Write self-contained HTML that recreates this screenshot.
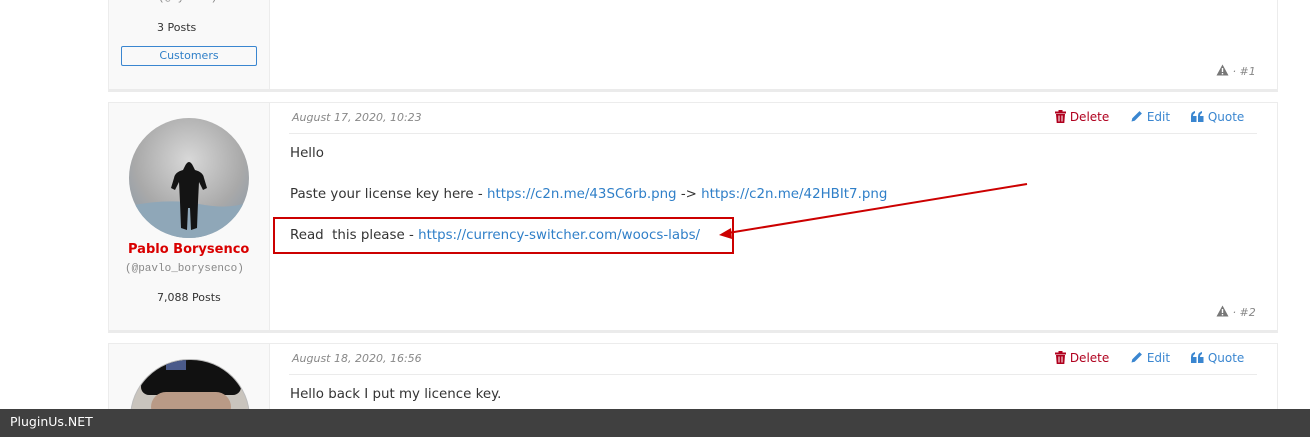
<!DOCTYPE html>
<html><head><meta charset="utf-8"><style>
html,body{margin:0;width:1310px;height:437px;overflow:hidden}
body{background:#fff;font-family:"DejaVu Sans","Liberation Sans",sans-serif;position:relative}
.a{position:absolute;white-space:nowrap}
.post{position:absolute;left:108px;width:1168px;border:1px solid #ececec;border-bottom:3px solid #ebebeb;background:#fff}
.left{position:absolute;left:0;top:0;bottom:0;width:160px;background:#f9f9f9;border-right:1px solid #ececec}
.t{font-size:13.4px;color:#333}
.l{color:#2f7fc8}
.date{font-size:11px;font-style:italic;color:#888}
.hr{position:absolute;height:1px;background:#ebebeb}
.act{font-size:12px}
.num{font-size:11px;color:#888;font-style:italic}
</style></head><body>
<div class="post" style="top:-10px;height:98px"><div class="left"></div></div>
<div class="a" style="left:158px;top:-8px;font-size:11px;color:#888;font-family:'Liberation Mono',monospace">(@xylian)</div>
<div class="a" style="left:157px;top:21px;font-size:11px;color:#333">3 Posts</div>
<div class="a" style="left:121px;top:46px;width:134px;height:18px;border:1px solid #3a86d0;border-radius:2px;font-size:11px;color:#2f7fc8;text-align:center;line-height:18px">Customers</div>
<div class="a num" style="left:1216px;top:64px"><svg width="13" height="12" viewBox="0 0 13 12" style="vertical-align:-1px"><path d="M6.5 0.5L12.5 11.5H0.5Z" fill="#777"/><rect x="5.8" y="4" width="1.4" height="4" fill="#fff"/><rect x="5.8" y="9" width="1.4" height="1.4" fill="#fff"/></svg> · #1</div>

<div class="post" style="top:102px;height:227px"><div class="left"></div></div>
<div class="a" style="left:129px;top:118px;width:120px;height:120px;border-radius:50%;background:radial-gradient(circle at 50% 35%,#d8d8d8,#a9a9a9 55%,#8c9aa8 85%);overflow:hidden">
<svg width="120" height="120" viewBox="0 0 120 120"><path d="M0 88 Q40 80 70 86 T120 84 V120 H0Z" fill="#8fa7b8"/><path d="M56 48 Q60 40 64 48 L66 52 Q74 54 75 60 L78 70 L74 72 L70 64 L69 84 L68 110 L62 112 L61 90 L59 90 L58 112 L52 110 L51 84 L50 64 L46 72 L42 70 L45 60 Q46 54 54 52Z" fill="#141414"/></svg></div>
<div class="a" style="left:128px;top:242px;font-size:13px;font-weight:bold;color:#d90000">Pablo Borysenco</div>
<div class="a" style="left:125px;top:263px;font-size:11px;color:#888;font-family:'Liberation Mono',monospace">(@pavlo_borysenco)</div>
<div class="a" style="left:157px;top:291px;font-size:11px;color:#333">7,088 Posts</div>
<div class="a date" style="left:292px;top:111px">August 17, 2020, 10:23</div>
<div class="hr" style="left:289px;top:133px;width:968px"></div>
<div class="a act" style="left:1055px;top:110px;color:#b0001e"><svg width="11" height="13" viewBox="0 0 11 13" style="vertical-align:-2px"><rect x="0" y="1.5" width="11" height="2" fill="#b0001e"/><rect x="3.5" y="0" width="4" height="2" fill="#b0001e"/><path d="M1 4H10L9.3 13H1.7Z" fill="#b0001e"/><rect x="3.5" y="5.5" width="1" height="6" fill="#fff"/><rect x="6.5" y="5.5" width="1" height="6" fill="#fff"/></svg> Delete</div>
<div class="a act" style="left:1131px;top:110px;color:#3a86d0"><svg width="12" height="12" viewBox="0 0 12 12" style="vertical-align:-1px"><path d="M0.5 11.5L1.3 8.3L8.5 1.1L10.9 3.5L3.7 10.7Z" fill="#3a86d0"/></svg> Edit</div>
<div class="a act" style="left:1191px;top:110px;color:#3a86d0"><svg width="13" height="11" viewBox="0 0 13 11" style="vertical-align:-1px"><path d="M0 5Q0 1 4 0V2Q2 3 2 5H5.5V11H0Z M7 5Q7 1 11 0V2Q9 3 9 5H12.5V11H7Z" fill="#3a86d0"/></svg> Quote</div>
<div class="a t" style="left:290px;top:146px">Hello</div>
<div class="a t" style="left:290px;top:187px">Paste your license key here - <span class="l">https://c2n.me/43SC6rb.png</span> -&gt; <span class="l">https://c2n.me/42HBIt7.png</span></div>
<div class="a" style="left:273px;top:217px;width:457px;height:33px;border:2px solid #cc0000"></div>
<div class="a t" style="left:290px;top:228px">Read&nbsp; this please - <span class="l">https://currency-switcher.com/woocs-labs/</span></div>
<svg class="a" style="left:0;top:0" width="1310" height="437"><line x1="1027" y1="184" x2="728" y2="233" stroke="#cc0000" stroke-width="2"/><path d="M719 235L731 228L732 239Z" fill="#cc0000"/></svg>
<div class="a num" style="left:1216px;top:305px"><svg width="13" height="12" viewBox="0 0 13 12" style="vertical-align:-1px"><path d="M6.5 0.5L12.5 11.5H0.5Z" fill="#777"/><rect x="5.8" y="4" width="1.4" height="4" fill="#fff"/><rect x="5.8" y="9" width="1.4" height="1.4" fill="#fff"/></svg> · #2</div>

<div class="post" style="top:343px;height:90px;border-bottom:none"><div class="left"></div></div>
<div class="a" style="left:130px;top:359px;width:118px;height:78px;border-radius:59px 59px 0 0;background:#c9c4bd;border:1px solid #bbb;border-bottom:none;overflow:hidden"><div style="position:absolute;left:10px;top:-5px;width:100px;height:40px;background:#111;border-radius:40px 40px 10px 10px"></div><div style="position:absolute;left:35px;top:0;width:20px;height:10px;background:#4a5a8a"></div><div style="position:absolute;left:20px;top:32px;width:80px;height:30px;background:#b99a86;border-radius:20px"></div></div>
<div class="a date" style="left:292px;top:352px">August 18, 2020, 16:56</div>
<div class="hr" style="left:289px;top:374px;width:968px"></div>
<div class="a act" style="left:1055px;top:351px;color:#b0001e"><svg width="11" height="13" viewBox="0 0 11 13" style="vertical-align:-2px"><rect x="0" y="1.5" width="11" height="2" fill="#b0001e"/><rect x="3.5" y="0" width="4" height="2" fill="#b0001e"/><path d="M1 4H10L9.3 13H1.7Z" fill="#b0001e"/><rect x="3.5" y="5.5" width="1" height="6" fill="#fff"/><rect x="6.5" y="5.5" width="1" height="6" fill="#fff"/></svg> Delete</div>
<div class="a act" style="left:1131px;top:351px;color:#3a86d0"><svg width="12" height="12" viewBox="0 0 12 12" style="vertical-align:-1px"><path d="M0.5 11.5L1.3 8.3L8.5 1.1L10.9 3.5L3.7 10.7Z" fill="#3a86d0"/></svg> Edit</div>
<div class="a act" style="left:1191px;top:351px;color:#3a86d0"><svg width="13" height="11" viewBox="0 0 13 11" style="vertical-align:-1px"><path d="M0 5Q0 1 4 0V2Q2 3 2 5H5.5V11H0Z M7 5Q7 1 11 0V2Q9 3 9 5H12.5V11H7Z" fill="#3a86d0"/></svg> Quote</div>
<div class="a t" style="left:290px;top:387px">Hello back I put my licence key.</div>

<div class="a" style="left:0;top:409px;width:1310px;height:28px;background:#404040"></div>
<div class="a" style="left:10px;top:414px;font-size:12.5px;color:#fff;font-family:'DejaVu Sans',sans-serif">PluginUs.NET</div>
</body></html>
